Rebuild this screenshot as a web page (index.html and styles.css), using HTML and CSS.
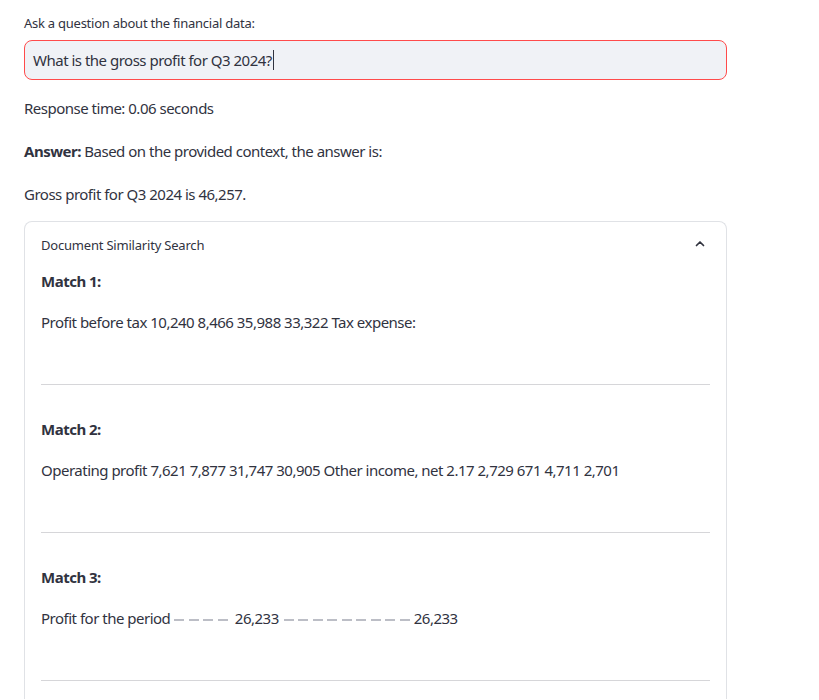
FILE: index.html
```html
<!DOCTYPE html>
<html>
<head>
<meta charset="utf-8">
<link rel="stylesheet" href="styles.css">
</head>
<body>
<main class="app">
  <label class="field-label">Ask a question about the financial data:</label>
  <div class="input-box">
    <span class="input-text">What is the gross profit for Q3 2024?</span><span class="caret"></span>
  </div>
  <p class="line line-first">Response time: 0.06 seconds</p>
  <p class="line"><strong>Answer:</strong> Based on the provided context, the answer is:</p>
  <p class="line">Gross profit for Q3 2024 is 46,257.</p>

  <section class="expander">
    <header class="exp-head">
      <span class="exp-title">Document Similarity Search</span>
      <svg class="chev" width="12" height="12" viewBox="0 0 12 12"><path d="M2.5 7.5 L6 4 L9.5 7.5" fill="none" stroke="#31333F" stroke-width="1.7" stroke-linecap="round" stroke-linejoin="round"/></svg>
    </header>
    <div class="exp-body">
      <div class="match">
        <p class="match-title">Match 1:</p>
        <p class="match-text">Profit before tax 10,240 8,466 35,988 33,322 Tax expense:</p>
        <hr class="rule">
      </div>
      <div class="match">
        <p class="match-title">Match 2:</p>
        <p class="match-text">Operating profit 7,621 7,877 31,747 30,905 Other income, net 2.17 2,729 671 4,711 2,701</p>
        <hr class="rule">
      </div>
      <div class="match">
        <p class="match-title">Match 3:</p>
        <p class="match-text">Profit for the period<span class="dashes dashes-a"><i></i><i></i><i></i><i></i></span>26,233<span class="dashes dashes-b"><i></i><i></i><i></i><i></i><i></i><i></i><i></i><i></i><i></i></span>26,233</p>
        <hr class="rule">
      </div>
    </div>
  </section>
</main>
</body>
</html>
```
FILE: styles.css
```css
* { box-sizing: border-box; }
html, body { margin: 0; padding: 0; background: #ffffff; }
body {
  font-family: "Noto Sans", "Open Sans", sans-serif;
  color: #31333F;
  font-size: 15px;
  letter-spacing: -0.5px;
}
.app {
  width: 703px;
  margin-left: 24px;
  padding-top: 13px;
  display: flex;
  flex-direction: column;
}
.field-label {
  display: block;
  font-size: 13px;
  letter-spacing: -0.25px;
  line-height: 20px;
  margin-bottom: 7px;
}
.input-box {
  height: 40px;
  border: 1px solid #FF4B4B;
  border-radius: 8px;
  background: #F0F2F6;
  display: flex;
  align-items: center;
  padding-left: 8px;
}
.input-text {
  color: #31333F;
}
.caret {
  display: inline-block;
  width: 1px;
  height: 20px;
  margin-left: 1px;
  background: #31333F;
}
.line {
  margin: 19px 0 0 0;
  line-height: 24px;
}
.line-first { margin-top: 16px; }
.expander {
  margin-top: 15px;
  border: 1px solid #e0e2e6;
  border-bottom: none;
  border-radius: 8px 8px 0 0;
  padding: 0 16px;
  height: 478px;
}
.exp-head {
  display: flex;
  justify-content: space-between;
  align-items: center;
  height: 45px;
  padding-top: 1px;
  font-size: 13px;
  letter-spacing: -0.2px;
}
.chev { margin-right: 4px; margin-top: -2px; }
.exp-body { display: flex; flex-direction: column; }
.match { display: flex; flex-direction: column; }
.match-title {
  margin: 2px 0 0 0;
  font-weight: 700;
  line-height: 24px;
}
.match-text {
  margin: 17px 0 0 0;
  line-height: 24px;
}
.rule {
  margin: 50px 0 30px 0;
  border: none;
  border-top: 1px solid #d6d6d9;
  height: 0;
}
.dashes { display: inline-flex; gap: 4.5px; vertical-align: middle; margin-top: -1px; }
.dashes-a { margin: 0 7px 0 4px; }
.dashes-b { margin: 0 4px 0 5px; }
.dashes i {
  display: block;
  width: 10px;
  height: 1.5px;
  background: #bcbec6;
}
```
